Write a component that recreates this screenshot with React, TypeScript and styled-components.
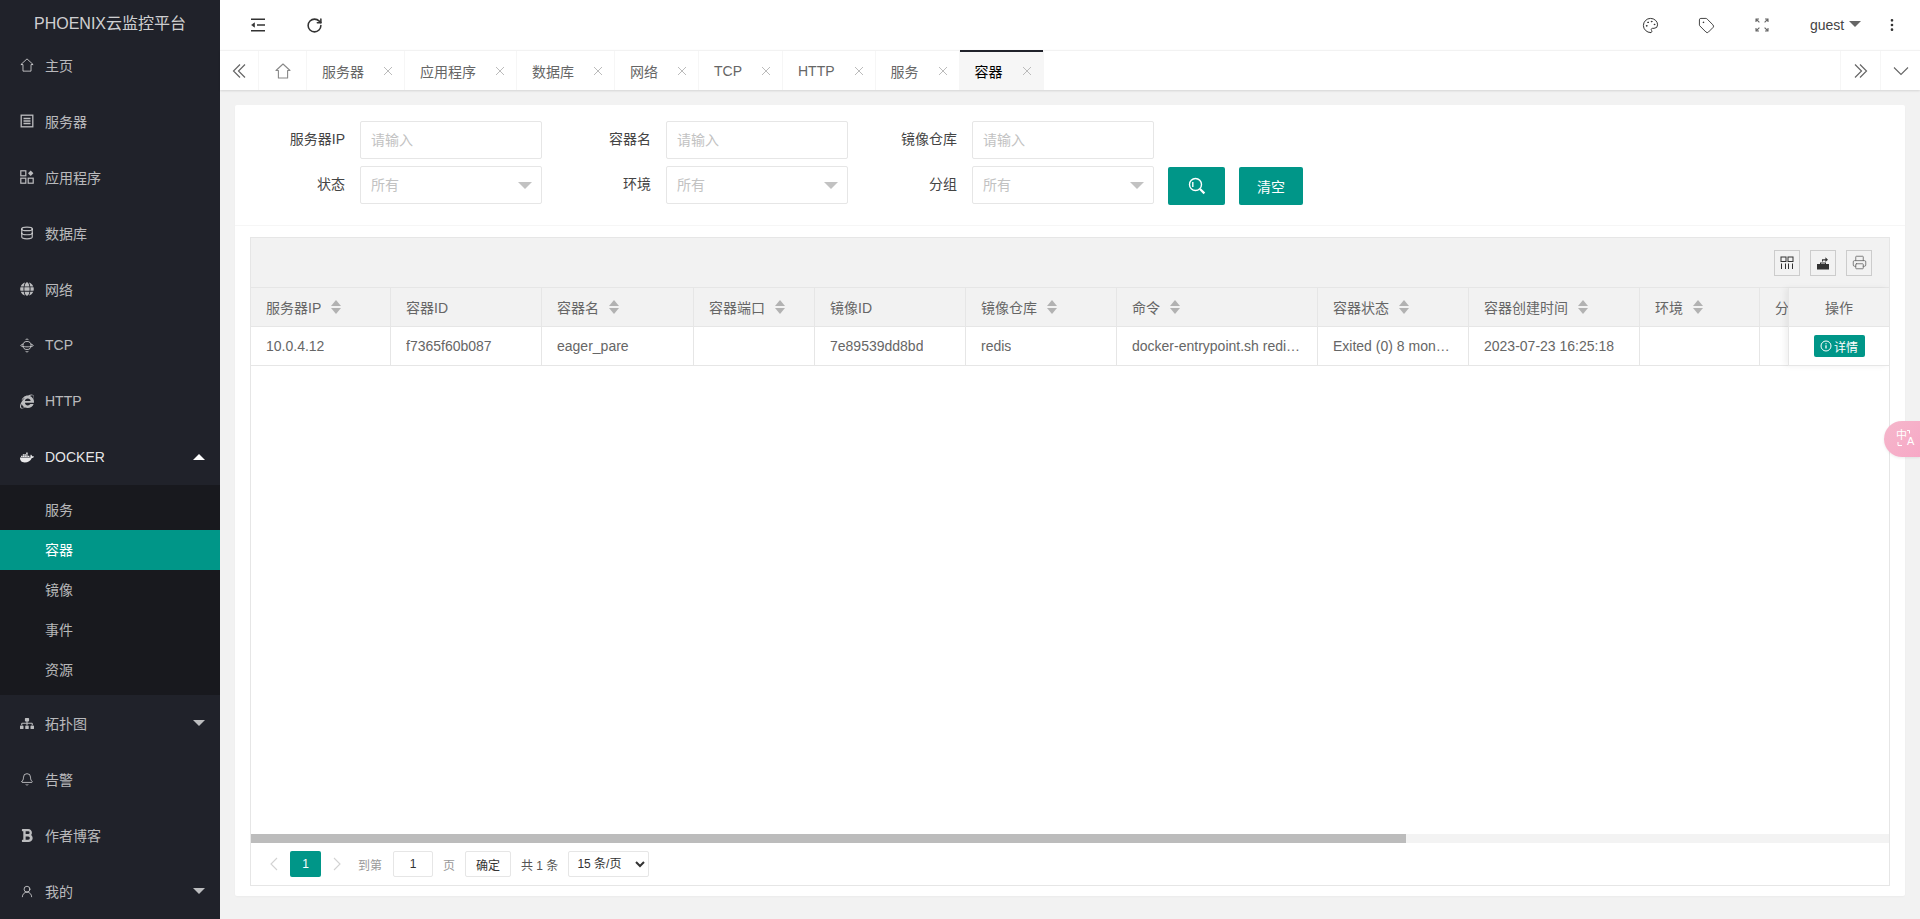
import React from 'react'
import styled, { createGlobalStyle } from 'styled-components'
import { Bell, Database, EllipsisVertical, Palette, Printer, RotateCw, Tag, UserRound } from 'lucide-react'
import { FaBold, FaDocker, FaGlobe, FaInternetExplorer, FaSitemap } from 'react-icons/fa'

const GlobalStyle = createGlobalStyle`
  html, body {
    margin: 0;
    height: 100%;
    overflow: hidden;
  }
  body {
    font-family: "Liberation Sans", "Noto Sans CJK SC", sans-serif;
    font-size: 14px;
    color: #666;
    background: #f2f2f2;
  }
  * {
    box-sizing: border-box;
  }
`

const Shell = styled.div`
  display: flex;
  height: 919px;
  position: relative;
  overflow: hidden;
`

const Sidebar = styled.aside`
  width: 220px;
  flex: none;
  background: #20222a;
  color: rgba(255, 255, 255, 0.7);
`

const Logo = styled.div`
  height: 37px;
  padding-top: 15px;
  line-height: 18px;
  font-size: 16px;
  text-align: center;
  color: rgba(255, 255, 255, 0.8);
`

const NavRow = styled.div<{ $open?: boolean }>`
  height: 56px;
  display: flex;
  align-items: center;
  padding-left: 20px;
  color: ${({ $open }) => ($open ? 'rgba(255, 255, 255, 0.9)' : 'inherit')};
  font-weight: 400;
`

const NavIcon = styled.span`
  width: 14px;
  height: 14px;
  margin-right: 11px;
  display: flex;
  align-items: center;
  justify-content: center;
  flex: none;
`

const NavCaret = styled.span<{ $up?: boolean }>`
  margin-left: auto;
  margin-right: 15px;
  width: 0;
  height: 0;
  border-left: 6px solid transparent;
  border-right: 6px solid transparent;
  border-top: ${({ $up }) => ($up ? '0' : '6px solid rgba(255, 255, 255, 0.7)')};
  border-bottom: ${({ $up }) => ($up ? '6px solid #fff' : '0')};
`

const SubNav = styled.div`
  background: #18191e;
  padding: 5px 0;
`

const SubItem = styled.div<{ $active?: boolean }>`
  height: 40px;
  line-height: 40px;
  padding-left: 45px;
  background: ${({ $active }) => ($active ? '#009688' : 'transparent')};
  color: ${({ $active }) => ($active ? '#fff' : 'inherit')};
`

const Main = styled.main`
  flex: 1;
  min-width: 0;
  display: flex;
  flex-direction: column;
`

const TopBar = styled.header`
  height: 50px;
  flex: none;
  background: #fff;
  display: flex;
  align-items: center;
  color: #333;
`

const TopButton = styled.span<{ $w?: number }>`
  width: ${({ $w }) => $w ?? 56}px;
  height: 50px;
  display: flex;
  align-items: center;
  justify-content: center;
  flex: none;
`

const TopSpacer = styled.div`
  flex: 1;
`

const UserName = styled.span`
  display: flex;
  align-items: center;
  margin-left: 20px;
  width: 54px;
  flex: none;
  color: #444;
`

const UserCaret = styled.i`
  width: 0;
  height: 0;
  margin: -2px 0 0 5px;
  border-left: 6px solid transparent;
  border-right: 6px solid transparent;
  border-top: 6px solid #666;
`

const TabBar = styled.nav`
  height: 40px;
  flex: none;
  background: #fff;
  display: flex;
  border-top: 1px solid #f2f2f2;
  box-shadow: 0 1px 2px rgba(0, 0, 0, 0.12);
  position: relative;
`

const TabTool = styled.span<{ $w?: number; $right?: boolean }>`
  width: ${({ $w }) => $w ?? 40}px;
  flex: none;
  display: flex;
  align-items: center;
  justify-content: center;
  color: #666;
  border-left: ${({ $right }) => ($right ? '1px solid #f6f6f6' : '0')};
  border-right: ${({ $right }) => ($right ? '0' : '1px solid #f6f6f6')};
`

const Tab = styled.div<{ $active?: boolean }>`
  display: flex;
  align-items: center;
  padding: 0 8px 0 15px;
  border-right: 1px solid #f6f6f6;
  position: relative;
  color: ${({ $active }) => ($active ? '#000' : '#666')};
  background: ${({ $active }) => ($active ? '#f6f6f6' : 'transparent')};
  ${({ $active }) =>
    $active &&
    `&::before {
      content: '';
      position: absolute;
      left: 0;
      right: 0;
      top: -1px;
      height: 2px;
      background: #20222a;
    }`}
`

const TabClose = styled.span`
  width: 16px;
  margin-left: 16px;
  text-align: center;
  color: #bbb;
  display: flex;
  justify-content: center;
`

const TabFill = styled.div`
  flex: 1;
`

const Content = styled.div`
  flex: 1;
  min-height: 0;
  padding: 15px 15px 23px;
  display: flex;
`

const Card = styled.section`
  flex: 1;
  min-width: 0;
  background: #fff;
  border-radius: 2px;
  box-shadow: 0 1px 2px rgba(0, 0, 0, 0.03);
  display: flex;
  flex-direction: column;
`

const FilterForm = styled.form`
  height: 121px;
  flex: none;
  padding: 16px 15px 0;
  border-bottom: 1px solid #f6f6f6;
  display: flex;
  flex-direction: column;
  gap: 7px;
`

const FormRow = styled.div`
  display: flex;
  height: 38px;
`

const FormLabel = styled.label`
  width: 110px;
  flex: none;
  padding-right: 15px;
  text-align: right;
  line-height: 36px;
  color: #444;
`

const InputBox = styled.div`
  width: 182px;
  margin-right: 14px;
  position: relative;
  flex: none;
`

const TextInput = styled.input`
  width: 100%;
  height: 38px;
  padding: 0 10px;
  border: 1px solid #e6e6e6;
  border-radius: 2px;
  background: #fff;
  font: inherit;
  outline: none;
  &::placeholder {
    color: #c2c2c2;
    opacity: 1;
  }
`

const SelectCaret = styled.i`
  position: absolute;
  right: 10px;
  top: 16px;
  width: 0;
  height: 0;
  border-left: 7px solid transparent;
  border-right: 7px solid transparent;
  border-top: 7px solid #c2c2c2;
`

const ActionButton = styled.button<{ $w: number }>`
  width: ${({ $w }) => $w}px;
  height: 38px;
  margin: 1px 14px 0 0;
  border: 0;
  border-radius: 2px;
  background: #009688;
  color: #fff;
  font: inherit;
  display: flex;
  align-items: center;
  justify-content: center;
  padding: 0;
`

const TableWrap = styled.div`
  flex: 1;
  min-height: 0;
  margin: 11px 15px 10px;
  border: 1px solid #e6e6e6;
  display: flex;
  flex-direction: column;
  position: relative;
  overflow: hidden;
`

const TableToolbar = styled.div`
  height: 50px;
  flex: none;
  background: #f2f2f2;
  border-bottom: 1px solid #e6e6e6;
  display: flex;
  justify-content: flex-end;
  align-items: center;
  gap: 10px;
  padding-right: 17px;
`

const ToolButton = styled.span`
  width: 26px;
  height: 26px;
  border: 1px solid #ccc;
  display: flex;
  align-items: center;
  justify-content: center;
  color: #333;
`

const GridRow = styled.div<{ $head?: boolean }>`
  display: grid;
  grid-template-columns: 140px 151px 152px 121px 151px 151px 201px 151px 171px 120px 200px;
  width: 1810px;
  height: 39px;
  flex: none;
  background: ${({ $head }) => ($head ? '#f2f2f2' : '#fff')};
  border-bottom: 1px solid #e6e6e6;
`

const Cell = styled.div`
  padding: 0 15px;
  display: flex;
  align-items: center;
  border-right: 1px solid #e6e6e6;
  min-width: 0;
`

const CellText = styled.span`
  white-space: nowrap;
  overflow: hidden;
  text-overflow: ellipsis;
`

const SortMark = styled.span`
  display: inline-flex;
  flex-direction: column;
  gap: 2px;
  margin-left: 10px;
  flex: none;
  &::before,
  &::after {
    content: '';
    width: 0;
    height: 0;
    border-left: 5px solid transparent;
    border-right: 5px solid transparent;
  }
  &::before {
    border-bottom: 6px solid #b2b2b2;
  }
  &::after {
    border-top: 6px solid #b2b2b2;
  }
`

const FixedColumn = styled.div`
  position: absolute;
  right: 0;
  top: 50px;
  width: 101px;
  border-left: 1px solid #e6e6e6;
  box-shadow: -3px 0 6px rgba(0, 0, 0, 0.06);
  background: #fff;
`

const FixedHead = styled.div`
  height: 39px;
  background: #f2f2f2;
  border-bottom: 1px solid #e6e6e6;
  display: flex;
  align-items: center;
  justify-content: center;
`

const FixedCell = styled.div`
  height: 39px;
  border-bottom: 1px solid #e6e6e6;
  display: flex;
  align-items: center;
  justify-content: center;
`

const DetailButton = styled.span`
  width: 51px;
  height: 22px;
  background: #009688;
  color: #fff;
  font-size: 12px;
  border-radius: 2px;
  display: flex;
  align-items: center;
  justify-content: center;
  gap: 2px;
`

const TableBody = styled.div`
  flex: 1;
`

const ScrollTrack = styled.div`
  height: 9px;
  flex: none;
  background: #f3f3f3;
`

const ScrollThumb = styled.div`
  width: 1155px;
  height: 100%;
  background: #bcbcbc;
`

const Pager = styled.div`
  height: 42px;
  flex: none;
  display: flex;
  align-items: center;
  border-top: 0;
  padding-left: 10px;
  font-size: 12px;
  color: #666;
`

const PagerArrow = styled.span`
  width: 26px;
  display: flex;
  justify-content: center;
`

const PagerCurrent = styled.span`
  width: 31px;
  height: 26px;
  margin: 0 3px;
  background: #009688;
  border-radius: 2px;
  color: #fff;
  display: flex;
  align-items: center;
  justify-content: center;
`

const PagerText = styled.span<{ $muted?: boolean; $gap?: number }>`
  margin-left: ${({ $gap }) => $gap ?? 10}px;
  color: ${({ $muted }) => ($muted ? '#999' : '#555')};
`

const PagerInput = styled.input`
  width: 40px;
  height: 26px;
  margin-left: 11px;
  border: 1px solid #e6e6e6;
  border-radius: 2px;
  text-align: center;
  font: inherit;
  color: #333;
  outline: none;
  padding: 0;
`

const PagerConfirm = styled.button`
  width: 46px;
  height: 26px;
  margin-left: 10px;
  border: 1px solid #e6e6e6;
  border-radius: 2px;
  background: #fff;
  font: inherit;
  color: #333;
  padding: 0;
`

const PagerSelect = styled.select`
  width: 81px;
  height: 26px;
  margin-left: 10px;
  border: 1px solid #e6e6e6;
  border-radius: 2px;
  background: #fff;
  font: inherit;
  color: #333;
  padding-left: 4px;
  outline: none;
`

const TranslateBubble = styled.div`
  position: absolute;
  right: 0;
  top: 421px;
  width: 36px;
  height: 36px;
  border-radius: 18px 0 0 18px;
  background: linear-gradient(135deg, #f5b7cb, #f7a8c6);
  box-shadow: 0 1px 3px rgba(0, 0, 0, 0.08);
  color: #fff;
`

const BubbleHan = styled.span`
  position: absolute;
  left: 12px;
  top: 8px;
  font-size: 11px;
  line-height: 13px;
`

const BubbleLatin = styled.span`
  position: absolute;
  left: 23px;
  top: 14px;
  font-size: 11px;
  line-height: 13px;
`

const BubbleArcs = styled.svg`
  position: absolute;
  left: 13px;
  top: 8px;
`

const HomeIcon = ({ size = 14, color = 'currentColor' }: { size?: number; color?: string }) => (
  <svg width={size} height={size} viewBox="0 0 16 16" fill="none" stroke={color} strokeWidth="1.1">
    <path d="M1 7.5 8 1l7 6.5h-2.4V15H3.4V7.5Z" strokeLinejoin="round" />
  </svg>
)

const ServerIcon = () => (
  <svg width="14" height="14" viewBox="0 0 14 14" fill="none" stroke="currentColor" strokeWidth="1.3">
    <rect x="1.2" y="1.2" width="11.6" height="11.6" />
    <path d="M3.5 4.5h7M3.5 7h7M3.5 9.5h7" />
  </svg>
)

const AppsIcon = () => (
  <svg width="14" height="14" viewBox="0 0 14 14" fill="none" stroke="currentColor" strokeWidth="1.2">
    <rect x="0.8" y="0.8" width="5" height="5" />
    <rect x="0.8" y="8.2" width="5" height="5" />
    <rect x="8.2" y="8.2" width="5" height="5" />
    <path d="M10.7 0.4 13.4 3.2 10.7 6 8 3.2Z" fill="currentColor" stroke="none" />
  </svg>
)

const OrbitIcon = () => (
  <svg width="15" height="15" viewBox="0 0 16 16" fill="none" stroke="currentColor" strokeWidth="1.1">
    <circle cx="8" cy="8" r="4.6" />
    <path d="M3.6 6.3C1.8 7 .8 7.6.8 8.1c0 .7 3.2 1.4 7.2 1.4s7.2-.7 7.2-1.4c0-.5-1-1.1-2.8-1.8" />
    <path d="M6.4 1.2 8 .6l1.6.6M6.4 14.8 8 15.4l1.6-.6" />
  </svg>
)

const CollapseIcon = () => (
  <svg width="16" height="14" viewBox="0 0 16 14" fill="none" stroke="#333" strokeWidth="1.5">
    <path d="M1 1.2h14M7 7h8M1 12.8h14" />
    <path d="M4.5 4.8 1.6 7l2.9 2.2Z" fill="#333" strokeWidth="0.6" />
  </svg>
)

const DoubleChevron = ({ flip }: { flip?: boolean }) => (
  <svg width="16" height="16" viewBox="0 0 16 16" fill="none" stroke="#666" strokeWidth="1.2">
    <path d={flip ? 'M2 1.5 8.5 8 2 14.5M7 1.5 13.5 8 7 14.5' : 'M14 1.5 7.5 8l6.5 6.5M9 1.5 2.5 8 9 14.5'} />
  </svg>
)

const WideChevronDown = () => (
  <svg width="16" height="10" viewBox="0 0 16 10" fill="none" stroke="#666" strokeWidth="1.1">
    <path d="M1 1.5 8 8.5l7-7" />
  </svg>
)

const PagerChevron = ({ flip }: { flip?: boolean }) => (
  <svg width="8" height="14" viewBox="0 0 8 14" fill="none" stroke="#d2d2d2" strokeWidth="1.1">
    <path d={flip ? 'M1 1l6 6-6 6' : 'M7 1 1 7l6 6'} />
  </svg>
)

const FullscreenIcon = () => (
  <svg width="14" height="14" viewBox="0 0 14 14" fill="none" stroke="#666" strokeWidth="1.1">
    <path d="M1 4V1h3M1 1l3.4 3.4M13 4V1h-3M13 1 9.6 4.4M1 10v3h3M1 13l3.4-3.4M13 10v3h-3M13 13 9.6 9.6" />
  </svg>
)

const SearchIcon = () => (
  <svg width="18" height="18" viewBox="0 0 18 18" fill="none" stroke="#fff" strokeWidth="1.4">
    <circle cx="7.5" cy="7.5" r="6" />
    <path d="M4.8 5v5" />
    <path d="m12 12 4.4 4.4" strokeWidth="2.2" />
  </svg>
)

const ColsIcon = () => (
  <svg width="14" height="14" viewBox="0 0 14 14" fill="none" stroke="#333" strokeWidth="1">
    <rect x="1" y="1" width="5" height="4.5" />
    <rect x="8" y="1" width="5" height="4.5" />
    <path d="M1.5 7.5V13M5.5 7.5V13M8.5 7.5V13M12.5 7.5V13" />
  </svg>
)

const ExportIcon = () => (
  <svg width="14" height="14" viewBox="0 0 14 14" fill="#333">
    <path d="M1 8h12v5.5H1z" />
    <path d="M4 8V6.4h6V8H9V7.4H5V8z" />
    <path d="M6 5.5V3.2h3.4V1.2L12 3.8 9.4 6V4.4H7v1.1z" />
  </svg>
)

const InfoIcon = () => (
  <svg width="12" height="12" viewBox="0 0 12 12" fill="none" stroke="#fff" strokeWidth="1">
    <circle cx="6" cy="6" r="5" />
    <path d="M6 5.2v3.4M6 3.2v1" strokeWidth="1.3" />
  </svg>
)

const topItems = [
  { label: '主页', icon: <HomeIcon /> },
  { label: '服务器', icon: <ServerIcon /> },
  { label: '应用程序', icon: <AppsIcon /> },
  { label: '数据库', icon: <Database size={14} /> },
  { label: '网络', icon: <FaGlobe size={14} /> },
  { label: 'TCP', icon: <OrbitIcon /> },
  { label: 'HTTP', icon: <FaInternetExplorer size={15} /> },
]

const bottomItems = [
  { label: '拓扑图', icon: <FaSitemap size={15} />, caret: true },
  { label: '告警', icon: <Bell size={15} strokeWidth={1.6} /> },
  { label: '作者博客', icon: <FaBold size={15} /> },
  { label: '我的', icon: <UserRound size={15} strokeWidth={1.6} />, caret: true },
]

const subItems = ['服务', '容器', '镜像', '事件', '资源']
const tabs = ['服务器', '应用程序', '数据库', '网络', 'TCP', 'HTTP', '服务', '容器']

const columns = [
  { title: '服务器IP', value: '10.0.4.12', sort: true },
  { title: '容器ID', value: 'f7365f60b087' },
  { title: '容器名', value: 'eager_pare', sort: true },
  { title: '容器端口', value: '', sort: true },
  { title: '镜像ID', value: '7e89539dd8bd' },
  { title: '镜像仓库', value: 'redis', sort: true },
  { title: '命令', value: 'docker-entrypoint.sh redis-server', sort: true },
  { title: '容器状态', value: 'Exited (0) 8 months ago', sort: true },
  { title: '容器创建时间', value: '2023-07-23 16:25:18', sort: true },
  { title: '环境', value: '', sort: true },
  { title: '分组', value: '', sort: true },
]

const App: React.FC = () => {
  return (
    <Shell>
      <GlobalStyle />
      <Sidebar>
        <Logo>PHOENIX云监控平台</Logo>
        {topItems.map((item) => (
          <NavRow key={item.label}>
            <NavIcon>{item.icon}</NavIcon>
            {item.label}
          </NavRow>
        ))}
        <NavRow $open>
          <NavIcon>
            <FaDocker size={17} />
          </NavIcon>
          DOCKER
          <NavCaret $up />
        </NavRow>
        <SubNav>
          {subItems.map((label) => (
            <SubItem key={label} $active={label === '容器'}>
              {label}
            </SubItem>
          ))}
        </SubNav>
        {bottomItems.map((item) => (
          <NavRow key={item.label}>
            <NavIcon>{item.icon}</NavIcon>
            {item.label}
            {item.caret && <NavCaret />}
          </NavRow>
        ))}
      </Sidebar>

      <Main>
        <TopBar>
          <TopButton $w={76}>
            <CollapseIcon />
          </TopButton>
          <TopButton $w={36}>
            <RotateCw size={17} strokeWidth={2.2} />
          </TopButton>
          <TopSpacer />
          <TopButton>
            <Palette size={17} strokeWidth={1.4} />
          </TopButton>
          <TopButton>
            <Tag size={17} strokeWidth={1.3} />
          </TopButton>
          <TopButton>
            <FullscreenIcon />
          </TopButton>
          <UserName>
            guest
            <UserCaret />
          </UserName>
          <TopButton>
            <EllipsisVertical size={16} strokeWidth={2} />
          </TopButton>
        </TopBar>

        <TabBar>
          <TabTool $w={39}>
            <DoubleChevron />
          </TabTool>
          <TabTool $w={48}>
            <HomeIcon size={16} color="#888" />
          </TabTool>
          {tabs.map((label) => (
            <Tab key={label} $active={label === '容器'}>
              {label}
              <TabClose>
                <svg width="10" height="10" viewBox="0 0 10 10" stroke="#bbb" strokeWidth="1">
                  <path d="m1 1 8 8M9 1 1 9" />
                </svg>
              </TabClose>
            </Tab>
          ))}
          <TabFill />
          <TabTool $right>
            <DoubleChevron flip />
          </TabTool>
          <TabTool $right>
            <WideChevronDown />
          </TabTool>
        </TabBar>

        <Content>
          <Card>
            <FilterForm>
              <FormRow>
                <FormLabel>服务器IP</FormLabel>
                <InputBox>
                  <TextInput placeholder="请输入" />
                </InputBox>
                <FormLabel>容器名</FormLabel>
                <InputBox>
                  <TextInput placeholder="请输入" />
                </InputBox>
                <FormLabel>镜像仓库</FormLabel>
                <InputBox>
                  <TextInput placeholder="请输入" />
                </InputBox>
              </FormRow>
              <FormRow>
                <FormLabel>状态</FormLabel>
                <InputBox>
                  <TextInput placeholder="所有" readOnly />
                  <SelectCaret />
                </InputBox>
                <FormLabel>环境</FormLabel>
                <InputBox>
                  <TextInput placeholder="所有" readOnly />
                  <SelectCaret />
                </InputBox>
                <FormLabel>分组</FormLabel>
                <InputBox>
                  <TextInput placeholder="所有" readOnly />
                  <SelectCaret />
                </InputBox>
                <ActionButton type="button" $w={57}>
                  <SearchIcon />
                </ActionButton>
                <ActionButton type="button" $w={64}>
                  清空
                </ActionButton>
              </FormRow>
            </FilterForm>

            <TableWrap>
              <TableToolbar>
                <ToolButton>
                  <ColsIcon />
                </ToolButton>
                <ToolButton>
                  <ExportIcon />
                </ToolButton>
                <ToolButton>
                  <Printer size={15} strokeWidth={1.3} color="#666" />
                </ToolButton>
              </TableToolbar>
              <GridRow $head>
                {columns.map((col) => (
                  <Cell key={col.title}>
                    <CellText>{col.title}</CellText>
                    {col.sort && <SortMark />}
                  </Cell>
                ))}
              </GridRow>
              <GridRow>
                {columns.map((col) => (
                  <Cell key={col.title}>
                    <CellText>{col.value}</CellText>
                  </Cell>
                ))}
              </GridRow>
              <FixedColumn>
                <FixedHead>操作</FixedHead>
                <FixedCell>
                  <DetailButton>
                    <InfoIcon />
                    详情
                  </DetailButton>
                </FixedCell>
              </FixedColumn>
              <TableBody />
              <ScrollTrack>
                <ScrollThumb />
              </ScrollTrack>
              <Pager>
                <PagerArrow>
                  <PagerChevron />
                </PagerArrow>
                <PagerCurrent>1</PagerCurrent>
                <PagerArrow>
                  <PagerChevron flip />
                </PagerArrow>
                <PagerText $muted $gap={8}>
                  到第
                </PagerText>
                <PagerInput defaultValue="1" />
                <PagerText $muted>页</PagerText>
                <PagerConfirm type="button">确定</PagerConfirm>
                <PagerText>共 1 条</PagerText>
                <PagerSelect defaultValue="15">
                  <option value="15">15 条/页</option>
                </PagerSelect>
              </Pager>
            </TableWrap>
          </Card>
        </Content>
      </Main>

      <TranslateBubble>
        <BubbleArcs width="16" height="24" viewBox="0 0 16 24" fill="none" stroke="#fff" strokeWidth="1">
          <path d="M10 1.5h2.5v3" />
          <path d="M1 13v3.5h4" />
        </BubbleArcs>
        <BubbleHan>中</BubbleHan>
        <BubbleLatin>A</BubbleLatin>
      </TranslateBubble>
    </Shell>
  )
}

export default App
